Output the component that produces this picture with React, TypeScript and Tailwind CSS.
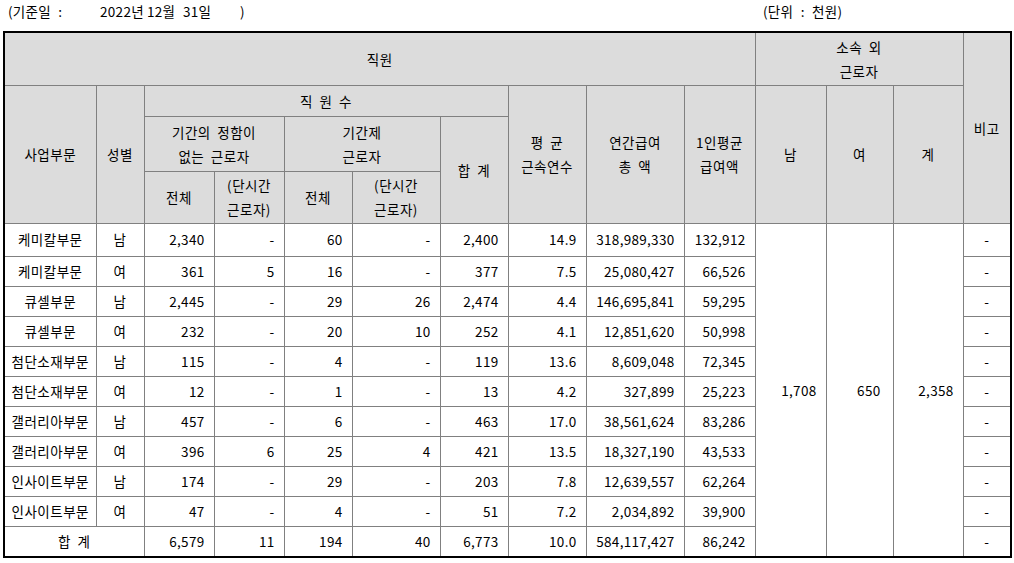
import React from 'react';

const FONT = { fontFamily: '"Noto Sans CJK KR", "Noto Sans", sans-serif' };

const ROWS: string[][] = [
  ['케미칼부문', '남', '2,340', '-', '60', '-', '2,400', '14.9', '318,989,330', '132,912'],
  ['케미칼부문', '여', '361', '5', '16', '-', '377', '7.5', '25,080,427', '66,526'],
  ['큐셀부문', '남', '2,445', '-', '29', '26', '2,474', '4.4', '146,695,841', '59,295'],
  ['큐셀부문', '여', '232', '-', '20', '10', '252', '4.1', '12,851,620', '50,998'],
  ['첨단소재부문', '남', '115', '-', '4', '-', '119', '13.6', '8,609,048', '72,345'],
  ['첨단소재부문', '여', '12', '-', '1', '-', '13', '4.2', '327,899', '25,223'],
  ['갤러리아부문', '남', '457', '-', '6', '-', '463', '17.0', '38,561,624', '83,286'],
  ['갤러리아부문', '여', '396', '6', '25', '4', '421', '13.5', '18,327,190', '43,533'],
  ['인사이트부문', '남', '174', '-', '29', '-', '203', '7.8', '12,639,557', '62,264'],
  ['인사이트부문', '여', '47', '-', '4', '-', '51', '7.2', '2,034,892', '39,900'],
];

const TOTAL = ['6,579', '11', '194', '40', '6,773', '10.0', '584,117,427', '86,242'];

const COLS = [92, 48, 70, 70, 68, 88, 68, 78, 98, 71, 71, 67, 70, 48];

const th =
  'border border-[#808080] bg-[#dcdcdc] font-normal text-center align-middle leading-[24px] tracking-[0.5px] [word-spacing:3px] p-0';
const td = 'border border-[#808080] bg-white p-0';
const num = `${td} text-right pr-[9px] tracking-[0.3px]`;
const ctr = `${td} text-center tracking-[0.5px] [word-spacing:3px]`;

export default function App() {
  return (
    <div className="w-[1014px] h-[563px] bg-white text-black text-[13.5px]" style={FONT}>
      {/* caption line */}
      <div className="h-[31px] flex items-start pt-[1px] leading-[20px] tracking-[0.3px]">
        <span className="ml-[8px] w-[92px] [word-spacing:4px]">(기준일 :</span>
        <span className="w-[47px]">2022년</span>
        <span className="w-[36px]">12월</span>
        <span className="w-[57px]">31일</span>
        <span className="w-[523px]">)</span>
        <span className="[word-spacing:4px]">(단위 : 천원)</span>
      </div>

      <table className="ml-[3px] w-[1007px] table-fixed border-collapse border-2 border-black">
        <colgroup>
          {COLS.map((w, i) => (
            <col key={i} style={{ width: w }} />
          ))}
        </colgroup>
        <thead>
          <tr className="h-[53px]">
            <th colSpan={10} className={th}>직원</th>
            <th colSpan={3} className={th}>
              소속 외<br />근로자
            </th>
            <th rowSpan={4} className={th}>비고</th>
          </tr>
          <tr className="h-[31px]">
            <th rowSpan={3} className={th}>사업부문</th>
            <th rowSpan={3} className={th}>성별</th>
            <th colSpan={5} className={th}>직 원 수</th>
            <th rowSpan={3} className={th}>
              평 균<br />근속연수
            </th>
            <th rowSpan={3} className={th}>
              연간급여<br />총 액
            </th>
            <th rowSpan={3} className={th}>
              1인평균<br />급여액
            </th>
            <th rowSpan={3} className={th}>남</th>
            <th rowSpan={3} className={th}>여</th>
            <th rowSpan={3} className={th}>계</th>
          </tr>
          <tr className="h-[55px]">
            <th colSpan={2} className={th}>
              기간의 정함이<br />없는 근로자
            </th>
            <th colSpan={2} className={th}>
              기간제<br />근로자
            </th>
            <th rowSpan={2} className={th}>합 계</th>
          </tr>
          <tr className="h-[52px]">
            <th className={th}>전체</th>
            <th className={`${th} leading-[22px]`}>
              (단시간<br />근로자)
            </th>
            <th className={th}>전체</th>
            <th className={`${th} leading-[22px]`}>
              (단시간<br />근로자)
            </th>
          </tr>
        </thead>
        <tbody>
          {ROWS.map((r, i) => (
            <tr key={i} className={i === 0 ? 'h-[33px]' : 'h-[30px]'}>
              <td className={ctr}>{r[0]}</td>
              <td className={ctr}>{r[1]}</td>
              {r.slice(2).map((v, j) => (
                <td key={j} className={num}>
                  {v}
                </td>
              ))}
              {i === 0 && (
                <>
                  <td rowSpan={11} className={num}>1,708</td>
                  <td rowSpan={11} className={`${num} pr-[12px]`}>650</td>
                  <td rowSpan={11} className={`${num} pr-[7px]`}>2,358</td>
                </>
              )}
              <td className={ctr}>-</td>
            </tr>
          ))}
          <tr className="h-[31px]">
            <td colSpan={2} className={ctr}>합 계</td>
            {TOTAL.map((v, j) => (
              <td key={j} className={num}>
                {v}
              </td>
            ))}
            <td className={ctr}>-</td>
          </tr>
        </tbody>
      </table>
    </div>
  );
}
